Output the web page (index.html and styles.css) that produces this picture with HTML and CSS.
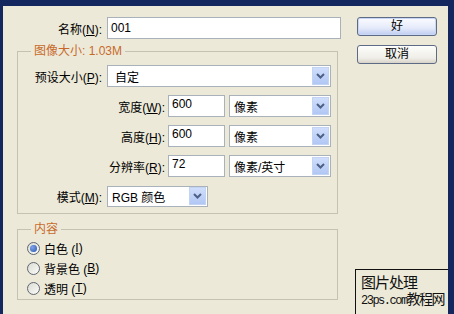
FILE: index.html
```html
<!DOCTYPE html>
<html lang="zh-CN">
<head>
  <meta charset="UTF-8">
  <meta name="viewport" content="width=device-width, initial-scale=1.0">
  <title>新建</title>
  <link rel="stylesheet" href="styles.css">
</head>
<body>
  <div class="dialog">
    <div class="form">
      <div class="row">
        <span class="label label-name">名称(<u>N</u>):</span>
        <input class="field field-name" type="text" value="001">
      </div>

      <fieldset class="group group-size">
        <legend>图像大小: 1.03M</legend>
        <div class="rows">
          <div class="row">
            <span class="label label-wide">预设大小(<u>P</u>):</span>
            <div class="combo combo-preset">
              <span class="combo-text">自定</span>
              <span class="combo-btn"><svg width="9" height="6" viewBox="0 0 9 6"><path d="M1 1 L4.5 4.5 L8 1" fill="none" stroke="#4d6185" stroke-width="2"/></svg></span>
            </div>
          </div>
          <div class="row">
            <span class="label label-dim">宽度(<u>W</u>):</span>
            <input class="field field-num" type="text" value="600">
            <div class="combo combo-unit">
              <span class="combo-text">像素</span>
              <span class="combo-btn"><svg width="9" height="6" viewBox="0 0 9 6"><path d="M1 1 L4.5 4.5 L8 1" fill="none" stroke="#4d6185" stroke-width="2"/></svg></span>
            </div>
          </div>
          <div class="row">
            <span class="label label-dim">高度(<u>H</u>):</span>
            <input class="field field-num" type="text" value="600">
            <div class="combo combo-unit">
              <span class="combo-text">像素</span>
              <span class="combo-btn"><svg width="9" height="6" viewBox="0 0 9 6"><path d="M1 1 L4.5 4.5 L8 1" fill="none" stroke="#4d6185" stroke-width="2"/></svg></span>
            </div>
          </div>
          <div class="row">
            <span class="label label-dim">分辨率(<u>R</u>):</span>
            <input class="field field-num" type="text" value="72">
            <div class="combo combo-unit">
              <span class="combo-text">像素/英寸</span>
              <span class="combo-btn"><svg width="9" height="6" viewBox="0 0 9 6"><path d="M1 1 L4.5 4.5 L8 1" fill="none" stroke="#4d6185" stroke-width="2"/></svg></span>
            </div>
          </div>
          <div class="row">
            <span class="label label-wide">模式(<u>M</u>):</span>
            <div class="combo combo-mode">
              <span class="combo-text">RGB 颜色</span>
              <span class="combo-btn"><svg width="9" height="6" viewBox="0 0 9 6"><path d="M1 1 L4.5 4.5 L8 1" fill="none" stroke="#4d6185" stroke-width="2"/></svg></span>
            </div>
          </div>
        </div>
      </fieldset>

      <fieldset class="group group-content">
        <legend>内容</legend>
        <label class="radio"><span class="radio-dot is-checked"></span>白色 (<u>I</u>)</label>
        <label class="radio"><span class="radio-dot"></span>背景色 (<u>B</u>)</label>
        <label class="radio"><span class="radio-dot"></span>透明 (<u>T</u>)</label>
      </fieldset>
    </div>

    <div class="actions">
      <button class="btn btn-default">好</button>
      <button class="btn">取消</button>
    </div>

    <div class="watermark">
      <div class="wm-top">图片处理</div>
      <div class="wm-bottom"><span class="wm-url">23ps.com</span><span class="wm-big">教程网</span></div>
    </div>
  </div>
</body>
</html>
```

FILE: styles.css
```css
body {
  margin: 0;
  font-family: "Liberation Sans", "Noto Sans CJK SC", sans-serif;
  font-size: 12px;
  color: #000;
}
.dialog {
  position: relative;
  display: flex;
  box-sizing: border-box;
  width: 454px;
  height: 314px;
  overflow: hidden;
  background-color: #ece9d8;
  border-top: 6px solid #14285f;
  border-left: 3px solid #14285f;
  border-right: 6px solid #14285f;
}
.form {
  width: 338px;
  padding-top: 11px;
}
.row {
  display: flex;
  align-items: center;
  height: 22px;
}
.label {
  flex: none;
  text-align: right;
  margin-right: 5px;
  white-space: nowrap;
}
.label-name {
  width: 99px;
}
.label-wide {
  width: 84px;
}
.label-dim {
  width: 147px;
  margin-right: 3px;
}
.field {
  box-sizing: border-box;
  height: 22px;
  margin: 0;
  padding: 0 3px;
  border: 1px solid #a9b1ba;
  background: #fff;
  font-family: "Liberation Sans", "Noto Sans CJK SC", sans-serif;
  font-size: 12px;
  color: #000;
  outline: none;
}
.field-name {
  width: 234px;
}
.field-num {
  width: 57px;
  margin-right: 4px;
  padding-top: 0;
  padding-bottom: 4px;
}
.group {
  box-sizing: border-box;
  width: 321px;
  margin: 5px 0 0 14px;
  padding: 7px 0 6px 0;
  border: 1px solid #c5c2b2;
}
.group legend {
  margin-left: 13px;
  padding: 0 3px;
  line-height: 14px;
  color: #c8692c;
}
.group-content {
  margin-top: 8px;
  padding: 2px 0 1px 0;
}
.rows {
  display: flex;
  flex-direction: column;
  gap: 8px;
}
.combo {
  box-sizing: border-box;
  display: flex;
  align-items: center;
  justify-content: space-between;
  height: 22px;
  border: 1px solid #a9b1ba;
  background: #fff;
}
.combo-text {
  padding-left: 4px;
  white-space: nowrap;
}
.combo-preset {
  width: 224px;
}
.combo-preset .combo-text {
  padding-left: 7px;
}
.combo-unit {
  width: 102px;
}
.combo-mode {
  width: 101px;
  height: 21px;
}
.combo-btn {
  display: flex;
  align-items: center;
  justify-content: center;
  width: 17px;
  height: 18px;
  margin-right: 1px;
  border: 1px solid #c3d3f3;
  box-sizing: border-box;
  background: linear-gradient(#d0defc, #b1c7f4);
}
.radio {
  display: flex;
  align-items: center;
  height: 20px;
  padding-left: 9px;
}
.radio-dot {
  position: relative;
  box-sizing: border-box;
  width: 13px;
  height: 13px;
  margin-right: 4px;
  border: 1px solid #5e6670;
  border-radius: 50%;
  background: linear-gradient(135deg, #dcdcd4, #fbfbf9);
}
.radio-dot.is-checked::after {
  content: "";
  position: absolute;
  left: 2px;
  top: 2px;
  width: 7px;
  height: 7px;
  border-radius: 50%;
  background: radial-gradient(circle at 35% 35%, #7fa3e6, #2a56b0);
}
.actions {
  display: flex;
  flex-direction: column;
  gap: 9px;
  margin-left: 16px;
  padding-top: 11px;
}
.btn {
  box-sizing: border-box;
  width: 80px;
  height: 19px;
  padding: 0;
  border: 1px solid #5d6b86;
  border-radius: 3px;
  background: linear-gradient(#fdfdfb, #efeee8 70%, #d8d3c8);
  font-family: "Liberation Sans", "Noto Sans CJK SC", sans-serif;
  font-size: 12px;
  line-height: 15px;
  color: #000;
}
.btn-default {
  background: linear-gradient(#fbfcff, #e4eafa 60%, #bccbf0);
  box-shadow: inset 0 0 0 1px #c9d6f5;
}
.watermark {
  position: absolute;
  left: 352px;
  top: 263px;
  box-sizing: border-box;
  width: 94px;
  height: 54px;
  padding: 5px 0 0 5px;
  border: 1px solid #111;
  background: #ece9d8;
  color: #111;
  white-space: nowrap;
  overflow: hidden;
}
.wm-top {
  font-size: 15px;
  line-height: 16px;
  letter-spacing: -1px;
}
.wm-bottom {
  display: flex;
  align-items: baseline;
  line-height: 16px;
}
.wm-url {
  font-family: "Liberation Mono", monospace;
  font-size: 12px;
  letter-spacing: -1.5px;
}
.wm-big {
  font-size: 14px;
  letter-spacing: -1.5px;
}
```
